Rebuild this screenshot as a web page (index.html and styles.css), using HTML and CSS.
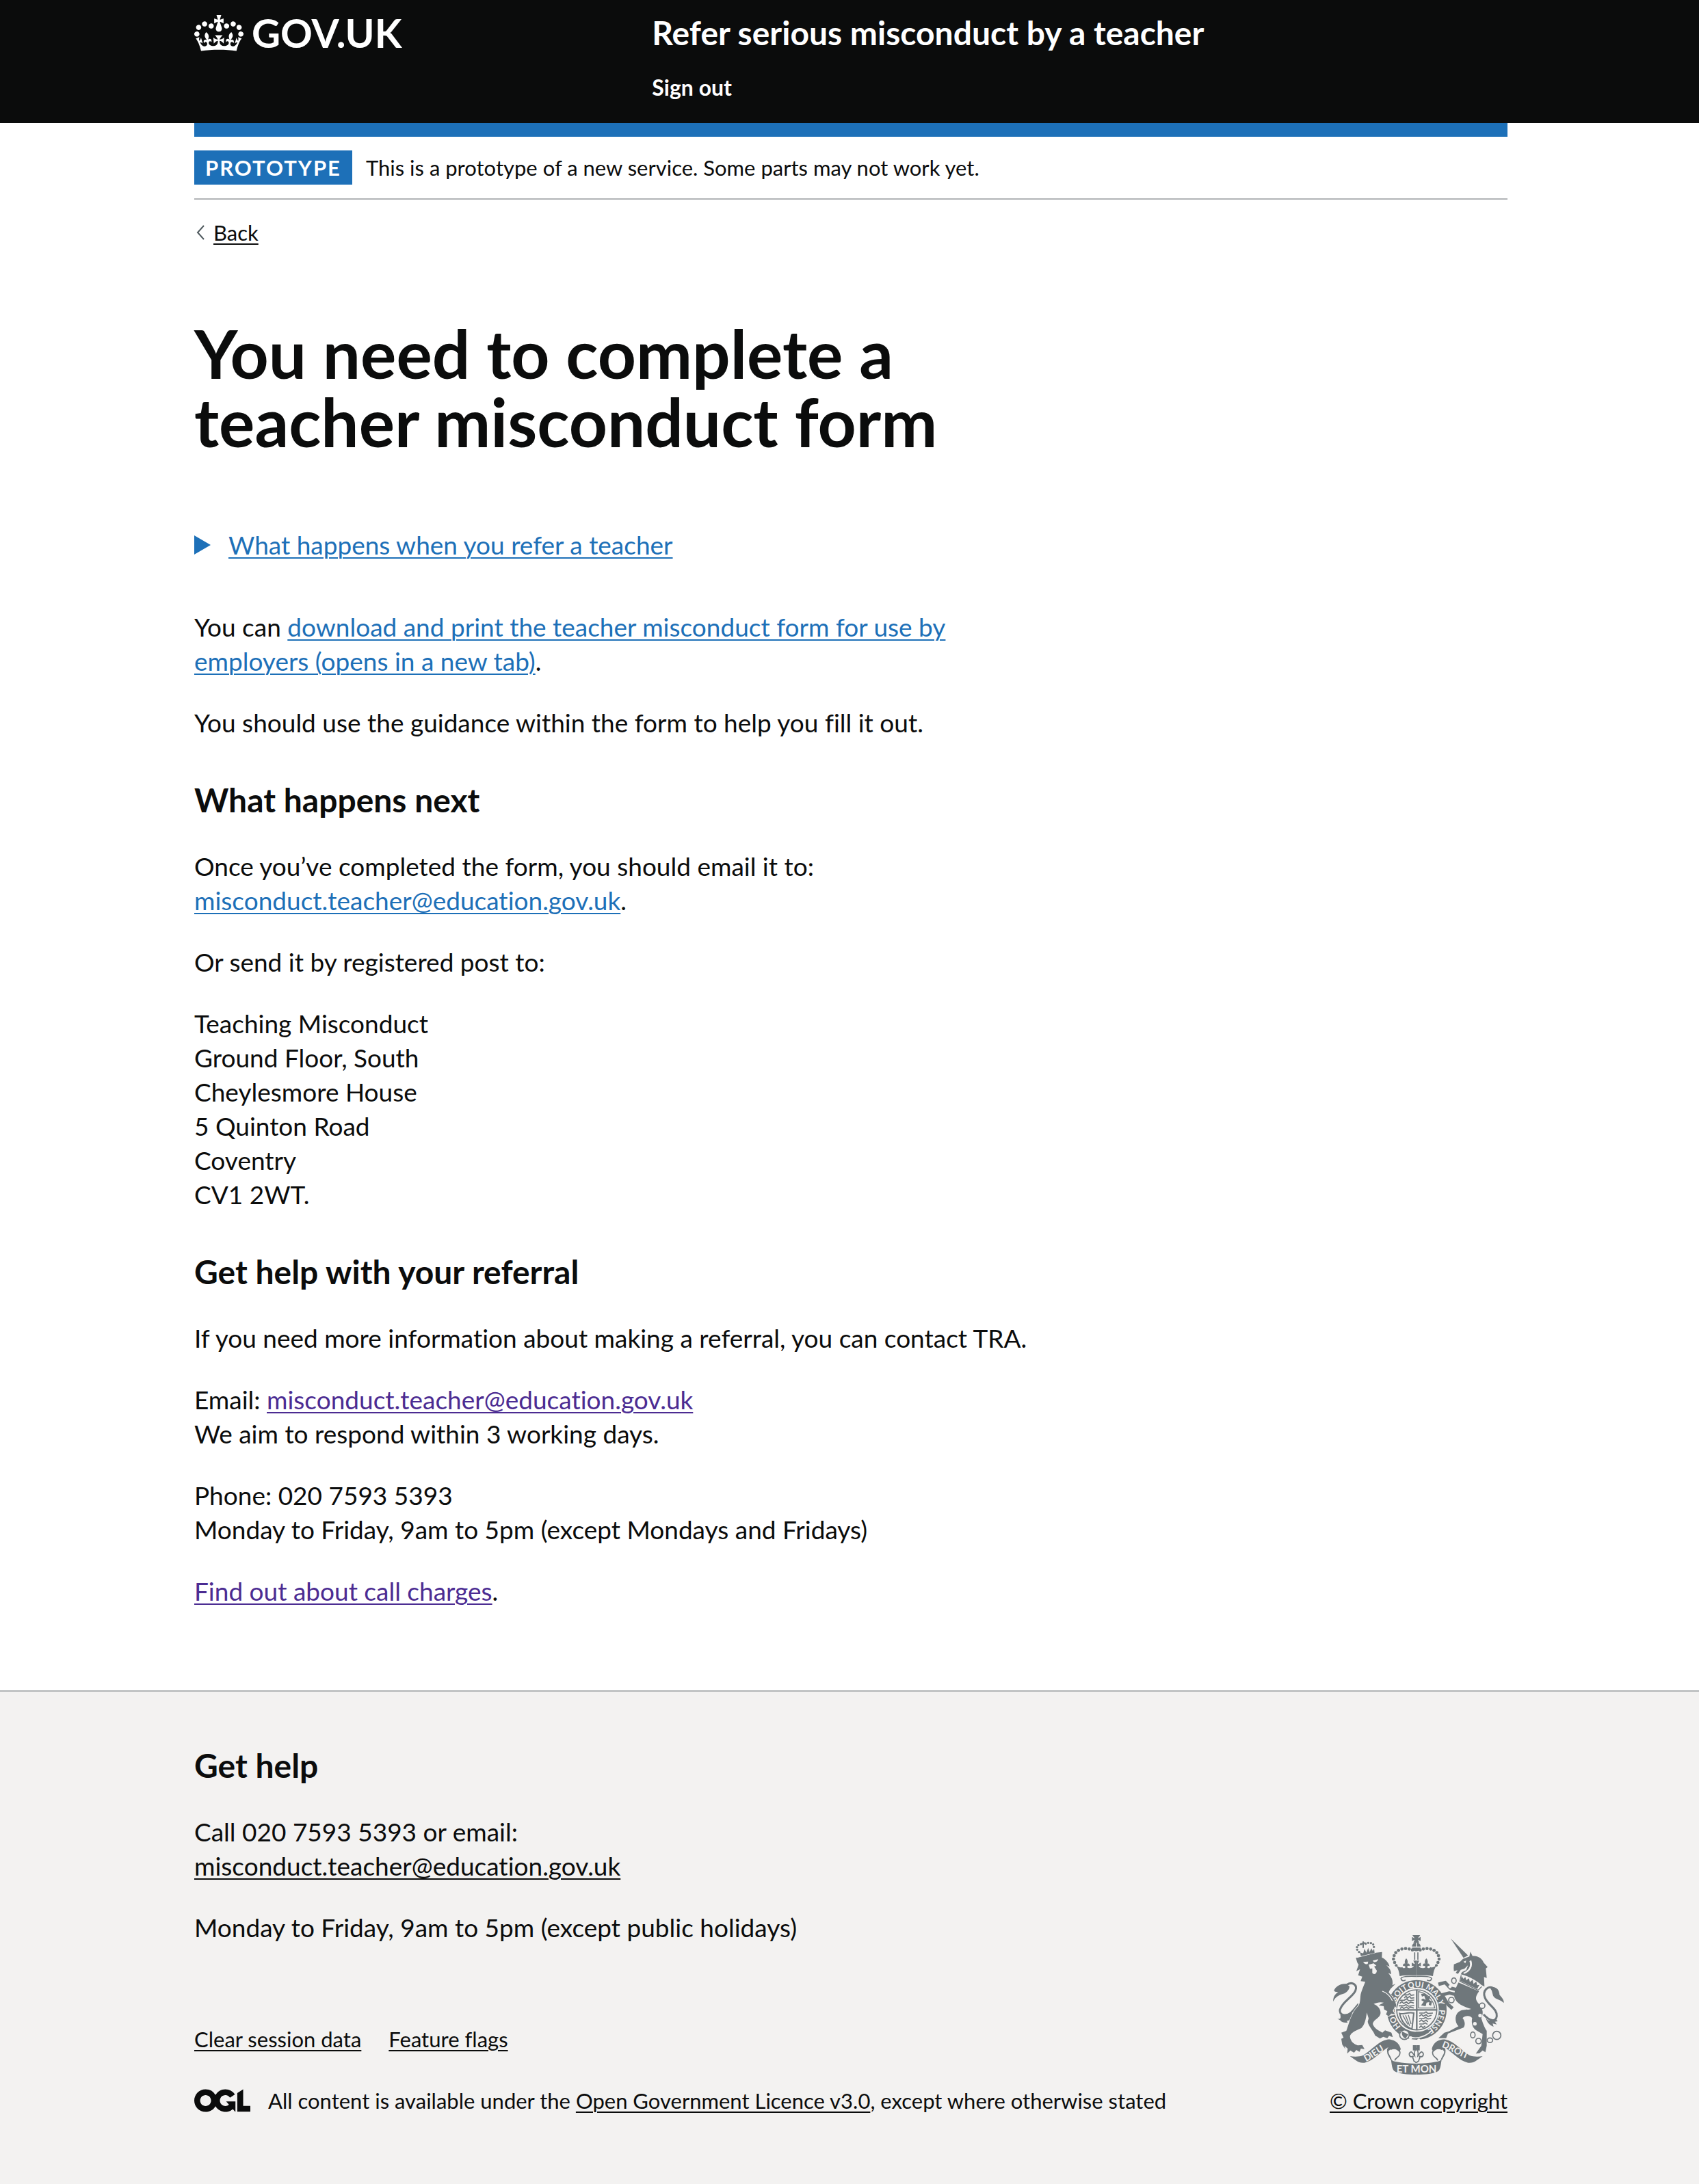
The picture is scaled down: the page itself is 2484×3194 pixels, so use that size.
FILE: index.html
```html
<!DOCTYPE html>
<html lang="en">
<head>
<meta charset="utf-8">
<meta name="viewport" content="width=device-width, initial-scale=1">
<title>You need to complete a teacher misconduct form - Refer serious misconduct by a teacher - GOV.UK</title>
<link rel="stylesheet" href="styles.css">
</head>
<body>
<header class="header">
  <div class="container header-grid">
    <a class="logo" href="#">
      <svg class="crown" viewBox="0 0 132 97" aria-hidden="true"><path fill="currentColor" fill-rule="evenodd" d="M25 30.2c3.5 1.5 7.7-.2 9.1-3.7 1.5-3.6-.2-7.8-3.9-9.2-3.6-1.4-7.6.3-9.1 3.9-1.4 3.5.3 7.5 3.9 9zM9 39.5c3.6 1.5 7.8-.2 9.2-3.7 1.5-3.6-.2-7.8-3.9-9.1-3.6-1.5-7.6.2-9.1 3.8-1.4 3.5.3 7.5 3.8 9zM4.4 57.2c3.5 1.5 7.7-.2 9.1-3.8 1.5-3.6-.2-7.7-3.9-9.1-3.5-1.5-7.6.3-9.1 3.8-1.4 3.5.3 7.6 3.9 9.1zm38.3-21.4c3.5 1.5 7.7-.2 9.1-3.8 1.5-3.6-.2-7.7-3.9-9.1-3.6-1.5-7.6.3-9.1 3.8-1.3 3.6.4 7.7 3.9 9.1zm64.4-5.6c-3.6 1.5-7.8-.2-9.1-3.7-1.5-3.6.2-7.8 3.8-9.2 3.6-1.4 7.7.3 9.2 3.9 1.3 3.5-.4 7.5-3.9 9zm15.9 9.3c-3.6 1.5-7.7-.2-9.1-3.7-1.5-3.6.2-7.8 3.7-9.1 3.6-1.5 7.7.2 9.2 3.8 1.5 3.5-.3 7.5-3.8 9zm4.7 17.7c-3.6 1.5-7.8-.2-9.2-3.8-1.5-3.6.2-7.7 3.9-9.1 3.6-1.5 7.7.3 9.2 3.8 1.3 3.5-.4 7.6-3.9 9.1zM89.3 35.8c-3.6 1.5-7.8-.2-9.2-3.8-1.4-3.6.2-7.7 3.9-9.1 3.6-1.5 7.7.3 9.2 3.8 1.4 3.6-.3 7.7-3.9 9.1zM69.7 17.7l8.9 4.7V9.3l-8.9 2.8c-.2-.3-.5-.6-.9-.9L72.4 0H59.6l3.5 11.2c-.3.3-.6.5-.9.9l-8.8-2.8v13.1l8.8-4.7c.3.3.6.7.9.9l-5 15.4v.1c-.2.8-.4 1.6-.4 2.4 0 4.1 3.1 7.5 7 8.1h.2c.3 0 .7.1 1 .1.4 0 .7 0 1-.1h.2c4-.6 7.1-4.1 7.1-8.1 0-.8-.1-1.7-.4-2.4V34l-5.1-15.4c.4-.2.7-.6 1-.9zM66 92.8c16.9 0 32.8 1.1 47.1 3.2 4-16.9 8.9-26.7 14-33.5l-9.6-3.4c1 4.9 1.1 7.2 0 10.2-1.5-1.4-3-4.3-4.2-8.7L108.6 76c2.8-2 5-3.2 7.5-3.3-4.4 9.4-10 11.9-13.6 11.2-4.3-.8-6.3-4.6-5.6-7.9 1-4.7 5.7-5.9 8-.5 4.3-8.7-3-11.4-7.6-8.8 7.1-7.2 7.9-13.5 2.1-21.1-8 6.1-8.1 12.3-4.5 20.8-4.7-5.4-12.1-2.5-9.5 6.2 3.4-5.2 7.9-2 7.2 3.1-.6 4.3-6.4 7.8-13.5 7.2-10.3-.9-10.9-8-11.2-13.8 2.5-.5 7.1 1.8 11 7.3L80.2 60c-4.1 4.4-8 5.3-12.3 5.4 1.4-4.4 8-11.6 8-11.6H55.5s6.4 7.2 7.9 11.6c-4.2-.1-8-1-12.3-5.4l1.4 16.4c3.9-5.5 8.5-7.7 10.9-7.3-.3 5.8-.9 12.8-11.1 13.8-7.2.6-12.9-2.9-13.5-7.2-.7-5 3.8-8.3 7.1-3.1 2.7-8.7-4.6-11.6-9.4-6.2 3.7-8.5 3.6-14.7-4.6-20.8-5.8 7.6-5 13.9 2.2 21.1-4.7-2.6-11.9.1-7.7 8.8 2.3-5.5 7.1-4.2 8.1.5.7 3.3-1.3 7.1-5.7 7.9-3.5.7-9-1.8-13.5-11.2 2.5.1 4.7 1.3 7.5 3.3l-4.7-15.4c-1.2 4.4-2.7 7.2-4.3 8.7-1.1-3-.9-5.3 0-10.2l-9.5 3.4c5 6.9 9.9 16.7 14 33.5 14.8-2.1 30.8-3.2 47.7-3.2z"/></svg>
      <span>GOV.UK</span>
    </a>
    <div class="header-content">
      <a class="service-name" href="#">Refer serious misconduct by a teacher</a>
      <nav class="header-nav"><a href="#">Sign out</a></nav>
    </div>
  </div>
</header>

<div class="container">
  <div class="phase-banner">
    <strong class="tag">PROTOTYPE</strong>
    <span>This is a prototype of a new service. Some parts may not work yet.</span>
  </div>
  <div class="back">
    <svg class="back-arrow" viewBox="0 0 14 24" aria-hidden="true"><path d="M12 2 3 12l9 10" fill="none" stroke="#505a5f" stroke-width="2"/></svg>
    <a href="#">Back</a>
  </div>
  <main class="main">
    <h1>You need to complete a teacher misconduct form</h1>
    <details>
      <summary>
        <svg class="marker" viewBox="0 0 24 28" aria-hidden="true"><path d="M0 0 24 14 0 28z" fill="currentColor"/></svg>
        <span>What happens when you refer a teacher</span>
      </summary>
    </details>
    <p>You can <a href="#">download and print the teacher misconduct form for use by employers (opens in a new tab)</a>.</p>
    <p>You should use the guidance within the form to help you fill it out.</p>
    <h2>What happens next</h2>
    <p>Once you’ve completed the form, you should email it to:<br><a href="#">misconduct.teacher@education.gov.uk</a>.</p>
    <p>Or send it by registered post to:</p>
    <p>Teaching Misconduct<br>Ground Floor, South<br>Cheylesmore House<br>5 Quinton Road<br>Coventry<br>CV1 2WT.</p>
    <h2>Get help with your referral</h2>
    <p>If you need more information about making a referral, you can contact TRA.</p>
    <p>Email: <a class="visited" href="#">misconduct.teacher@education.gov.uk</a><br>We aim to respond within 3 working days.</p>
    <p>Phone: 020 7593 5393<br>Monday to Friday, 9am to 5pm (except Mondays and Fridays)</p>
    <p><a class="visited" href="#">Find out about call charges</a>.</p>
  </main>
</div>

<footer class="footer">
  <div class="container footer-row">
    <div class="footer-main">
      <h2>Get help</h2>
      <p>Call 020 7593 5393 or email:<br><a href="#">misconduct.teacher@education.gov.uk</a></p>
      <p>Monday to Friday, 9am to 5pm (except public holidays)</p>
      <ul class="footer-links">
        <li><a href="#">Clear session data</a></li>
        <li><a href="#">Feature flags</a></li>
      </ul>
      <div class="licence">
        <svg class="ogl" viewBox="0 0 483.2 195.7" aria-hidden="true"><path fill="currentColor" d="M421.5 142.8V.1l-50.7 32.3v161.1h112.4v-50.7zm-122.3-9.6A47.12 47.12 0 0 1 221 97.8c0-26 21.1-47.1 47.1-47.1 16.7 0 31.4 8.7 39.7 21.8l42.7-27.2A97.63 97.63 0 0 0 268.1 0c-36.5 0-68.3 20.1-85.1 49.7A98 98 0 0 0 97.8 0C43.9 0 0 43.9 0 97.8s43.9 97.8 97.8 97.8c36.5 0 68.3-20.1 85.1-49.7a97.76 97.76 0 0 0 149.6 25.4l19.4 22.2h3v-87.8h-80l24.3 27.5zM97.8 145c-26 0-47.1-21.1-47.1-47.1s21.1-47.1 47.1-47.1 47.1 21.1 47.1 47.1S123.8 145 97.8 145"/></svg>
        <span>All content is available under the <a href="#">Open Government Licence v3.0</a>, except where otherwise stated</span>
      </div>
    </div>
    <div class="copyright">
      <svg class="arms" viewBox="84 60 750 612" aria-hidden="true">
        <defs>
          <path id="belt" d="M383.4 463A101 101 0 0 1 518.6 313A101 101 0 0 1 383.4 463"/>
          <path id="dieu" d="M228 615C262 602 290 568 340 553"/>
          <path id="droit" d="M559 551C600 562 636 596 698 612"/>
          <g id="half">
            <!-- crown arch pearls -->
            <g><circle cx="432" cy="125" r="7"/><circle cx="418" cy="121" r="7"/><circle cx="402" cy="119" r="7"/><circle cx="386" cy="121" r="7"/><circle cx="371" cy="127" r="7"/><circle cx="359" cy="137" r="7"/><circle cx="352" cy="150" r="7"/><circle cx="349" cy="165" r="7"/><circle cx="354" cy="180" r="7"/><circle cx="361" cy="193" r="6"/></g>
            <!-- rim with fleur-de-lis -->
            <path d="M449 236C415 236 388 236 376 240C374 222 370 208 360 192C368 200 380 204 388 200C390 206 398 206 402 200C398 196 394 192 390 196C390 188 396 182 400 186C396 176 400 168 405 162C410 168 414 176 410 186C416 182 421 188 420 196C416 192 411 196 408 200C416 208 434 206 438 196C434 192 432 196 429 198V180C434 184 438 186 443 187L436 172H449Z"/>
            <path d="M449 241C420 240 384 241 382 250C384 262 394 262 402 257" fill="none" stroke="currentColor" stroke-width="5"/>
            <!-- scroll -->
            <path d="M158 591C178 594 200 594 216 587C256 562 284 524 322 518C350 516 374 530 381 560L374 572C364 560 348 556 335 562L324 572C320 564 322 558 326 552C298 566 262 612 222 620C196 624 180 606 158 591Z"/>
            <path d="M336 562C358 548 384 566 376 584C372 598 358 596 355 610" fill="none" stroke="currentColor" stroke-width="5"/>
            <path d="M325 560C318 582 334 590 338 606" fill="none" stroke="currentColor" stroke-width="6"/>
            <path d="M335 594C338 608 346 614 362 616C390 622 420 624 449 624V672C410 672 372 668 352 656C340 644 342 620 335 594Z"/>
            <!-- fleur under the shield -->
            <path d="M434 543H449V566H434Z"/>
            <path d="M449 556C440 568 440 580 442 590C436 584 434 574 426 572C414 576 416 594 430 594L436 590C428 600 440 604 438 612L449 620" fill="none" stroke="currentColor" stroke-width="5"/>
          </g>
        </defs>
        <g fill="currentColor">
          <!-- belt and shield -->
          <path fill-rule="evenodd" d="M451 257a131 131 0 1 0 .1 0ZM451 291a97 97 0 1 1-.1 0Z"/>
          <circle cx="451" cy="388" r="88" fill="none" stroke="currentColor" stroke-width="5"/>
          <path d="M451 300V476M363 388H539" stroke="currentColor" stroke-width="7"/>
          <path d="M459 308V380H530C524 346 500 316 459 308Z" fill="none" stroke="currentColor" stroke-width="4"/>
          <path d="M470 368L482 352L470 345L478 338L490 344L484 326L474 330L470 318L486 316L500 330L510 326L506 344L518 352L514 370L504 366L506 354L494 356L490 372Z"/>
          <g fill="none" stroke="currentColor" stroke-width="5">
            <path d="M392 322h20l8-6 6 8 14-2M396 336l8-8 6 8 10-7 6 8 14-2M376 346h20l10-6 10 8 24-3M376 360l10-8 8 8 12-7 8 8 10-7 14 4M372 370h22l10-5 10 7 26-3M378 382l8-7 8 7 12-6 8 6 10-6 14 4"/>
            <path d="M462 402h22l8-5 8 7 22-2M462 416l10-8 8 8 12-7 8 8 16-6M462 426h20l8-5 10 7 14-2M462 440l10-8 8 8 12-7 8 8M462 450h18l8-5 10 7M462 466l8-8 8 8 10-7"/>
          </g>
          <path d="M376 404C392 410 410 396 438 402L430 472C404 462 384 440 376 404Z" fill="none" stroke="currentColor" stroke-width="6"/>
          <path d="M390 412L412 452M402 412L420 458M414 410L426 450" stroke="currentColor" stroke-width="4"/>
          <!-- strap and buckle -->
          <path d="M378 482C398 512 470 530 520 476" fill="none" stroke="#f3f2f1" stroke-width="5"/>
          <path d="M446 484H470L466 496H448Z"/>
          <circle cx="397" cy="497" r="21" fill="#f3f2f1" stroke="currentColor" stroke-width="5"/>
          <path d="M386 482L414 496L402 514C390 508 384 498 386 482Z"/>
          <circle cx="424" cy="511" r="7" fill="#f3f2f1"/><circle cx="460" cy="521" r="7" fill="#f3f2f1"/>
          <g class="motto motto-belt">
            <text><textPath href="#belt" startOffset="2">HON</textPath></text>
            <text><textPath href="#belt" startOffset="120">SOIT</textPath></text>
            <text><textPath href="#belt" startOffset="202">QUI</textPath></text>
            <text><textPath href="#belt" startOffset="276">MAL</textPath></text>
            <text><textPath href="#belt" startOffset="354">Y</textPath></text>
            <text><textPath href="#belt" startOffset="394">PENSE</textPath></text>
          </g>
          <!-- symmetrical parts -->
          <use href="#half"/>
          <use href="#half" transform="translate(898 0) scale(-1 1)"/>
          <path d="M432 60H466L456 74L468 68V86L456 80L462 94H436L442 80L430 86V68L442 74Z"/>
          <path d="M430 110a19 18 0 0 1 38 0ZM430 115H468C466 136 432 136 430 115Z"/>
          <path d="M442 136V168M456 136V168" stroke="currentColor" stroke-width="5"/>
          <path d="M449 94V112" stroke="#f3f2f1" stroke-width="4"/>
          <!-- lion -->
          <path d="M84 352C85 325 96 318 106 310C94 310 90 308 88 304C94 286 116 272 140 274L156 284C156 302 140 316 120 320C104 326 92 335 84 352Z"/>
          <path d="M142 279C170 260 192 280 182 304C170 332 124 352 114 388C112 412 138 418 158 404C172 394 182 378 196 362" fill="none" stroke="currentColor" stroke-width="9"/>
          <path d="M102 426C112 430 120 428 116 410L170 402C168 424 158 436 144 436L148 444C132 444 122 442 116 434Z"/>
          <path stroke="#f3f2f1" stroke-width="5" paint-order="stroke" d="M190 180L184 160L272 137L299 134L298 158C314 166 328 180 332 198L318 192C332 205 340 218 338 232L326 226C342 245 348 262 344 280L358 274C344 290 332 296 328 312C350 335 362 356 362 380L356 372L346 392L356 408L340 404L328 416L316 408L322 394L308 386L306 372L284 368L306 356C290 352 276 356 262 362C282 370 294 386 292 404C290 424 260 430 258 450C268 476 290 480 300 488L312 478L340 488L346 508L330 502L322 512L304 506L290 514L268 500C262 480 240 462 236 440L240 425L232 400C228 430 222 455 208 468C180 480 160 490 158 505C160 528 178 540 192 544L212 542L222 560L206 558L200 572L186 564L176 576L160 566L146 580L148 558L134 546L138 560L124 540L120 515L130 510L120 488L142 480C152 456 164 400 190 376C205 362 202 340 205 320C212 295 220 280 225 265L205 262L212 242L194 236L202 210L186 218L196 190Z"/>
          <path fill="#f3f2f1" d="M216 178L238 176L236 186C228 190 220 186 216 178ZM258 172L282 166C280 176 270 180 262 178ZM240 190L262 184L274 194L264 198L276 216C276 230 262 236 256 226L256 206L246 208Z"/>
          <path fill="none" stroke="#f3f2f1" stroke-width="4" d="M300 306C320 314 336 330 344 348"/>
          <path d="M188 158L270 136" stroke="#f3f2f1" stroke-width="4"/>
          <path d="M202 136L206 152L266 138L264 120L258 130L252 118L244 134L238 116L230 137L222 120L216 140Z"/>
          <g><circle cx="198" cy="134" r="5"/><circle cx="190" cy="124" r="5"/><circle cx="189" cy="113" r="5"/><circle cx="195" cy="104" r="5"/><circle cx="206" cy="100" r="5"/><circle cx="227" cy="98" r="5"/><circle cx="238" cy="94" r="5"/><circle cx="250" cy="95" r="5"/><circle cx="260" cy="101" r="5"/><circle cx="263" cy="112" r="5"/></g>
          <path d="M216 88V116M208 98L226 94" stroke="currentColor" stroke-width="6"/>
          <!-- unicorn -->
          <path d="M600 75L676 149L656 160Z"/>
          <path d="M613 205L614 188L640 178L654 164L682 154L686 133L696 152C720 150 738 164 744 180L762 200L754 206L758 248L746 244L748 286L734 278C714 262 690 244 644 232L650 222L668 214L676 192L660 208L644 212L632 230L622 226L630 214L614 218Z"/>
          <path fill="#f3f2f1" d="M656 176L668 172L664 184ZM690 170C700 196 686 220 660 230L654 226C680 214 690 196 682 174Z"/>
          <path fill="none" stroke="currentColor" stroke-width="4" d="M646 236L640 262L720 302L736 286"/>
          <path d="M648 240L656 252L664 244L668 258L680 250L684 266L696 256L700 274L712 264L716 280L726 278L716 296L642 260Z"/>
          <path d="M634 268L724 307C706 332 708 344 722 360C744 386 744 404 734 424C742 450 748 466 758 480V545L752 574L740 566L726 578L710 580L734 546L740 494L712 478C694 466 690 446 694 424C684 410 662 414 652 424C664 440 664 456 656 466L588 492L580 512H546L572 488L592 482L634 460C616 440 616 404 642 392C660 384 676 390 690 384C656 374 624 360 616 332C612 315 625 285 634 268Z"/>
          <g fill="none" stroke="currentColor" stroke-width="15" stroke-linejoin="round"><path d="M546 276L576 268L598 292L628 300"/><path d="M608 382L588 364L562 322L594 314L628 322"/></g>
          <g fill="#f3f2f1"><circle cx="597" cy="286" r="7"/><circle cx="729" cy="413" r="8"/><circle cx="706" cy="449" r="8"/></g>
          <g fill="#f3f2f1" stroke="currentColor" stroke-width="5"><ellipse cx="614" cy="260" rx="10" ry="12"/><circle cx="603" cy="345" r="12"/><circle cx="738" cy="370" r="12"/><ellipse cx="697" cy="498" rx="10" ry="13"/><circle cx="722" cy="525" r="12"/><ellipse cx="772" cy="521" rx="12" ry="10"/><circle cx="802" cy="500" r="18"/></g>
          <path d="M772 290C798 282 814 300 814 322C824 334 834 344 833 358C820 342 796 344 786 326L780 304Z"/>
          <path fill="none" stroke="currentColor" stroke-width="9" d="M790 294C764 278 738 304 750 334C762 366 806 384 802 416C798 444 772 438 744 408"/>
          <path d="M754 424C764 438 776 440 796 424L806 438L794 440L802 452L784 448L788 462C770 456 760 444 754 424Z"/>
          <g class="motto">
            <text><textPath href="#dieu">DIEU</textPath></text>
            <text><textPath href="#droit">DROIT</textPath></text>
            <text x="450" y="663" text-anchor="middle" class="motto-centre">ET MON</text>
          </g>
        </g>
      </svg>
      <a href="#">© Crown copyright</a>
    </div>
  </div>
</footer>
</body>
</html>
```
FILE: styles.css
```css
* {
  box-sizing: border-box;
}

body {
  margin: 0;
  font-family: Lato, "Liberation Sans", sans-serif;
  font-size: 37px;
  font-variant-ligatures: none;
  line-height: 50px;
  color: #0b0c0c;
  background: #fff;
}

a {
  color: #1d70b8;
  text-decoration: underline;
  text-decoration-thickness: 2px;
  text-underline-offset: 4px;
}

a.visited {
  color: #4c2c92;
}

svg {
  display: block;
  flex: none;
}

.container {
  max-width: 1924px;
  margin: 0 auto;
  padding-left: 4px;
}

/* Header */
.header {
  background: #0b0c0c;
  color: #fff;
}

.header a {
  color: #fff;
  font-weight: 700;
  text-decoration: none;
}

.header-grid {
  display: grid;
  grid-template-columns: minmax(0, 1fr) minmax(0, 2fr);
  column-gap: 44px;
  padding-top: 18px;
  padding-bottom: 32px;
}

.logo {
  display: flex;
  gap: 12px;
  align-items: center;
  align-self: start;
  font-size: 58px;
  line-height: 60px;
}

.crown {
  width: 72px;
  height: 53px;
}

.header-content {
  display: flex;
  flex-direction: column;
  gap: 30px;
}

.service-name {
  font-size: 48px;
  line-height: 60px;
}

.header-nav {
  font-size: 32px;
  line-height: 40px;
}

/* Phase banner and back link */
.phase-banner {
  display: flex;
  align-items: center;
  gap: 20px;
  padding: 20px 0;
  border-top: 20px solid #1d70b8;
  border-bottom: 2px solid #b1b4b6;
  font-size: 31px;
}

.tag {
  padding: 0 16px;
  background: #1d70b8;
  color: #fff;
  letter-spacing: 2px;
}

.back {
  display: flex;
  align-items: center;
  gap: 12px;
  margin-top: 28px;
  padding-left: 2px;
  font-size: 31px;
  line-height: 40px;
}

.back a {
  color: #0b0c0c;
}

.back-arrow {
  width: 14px;
  height: 24px;
}

/* Main content */
.main {
  max-width: 1260px;
  padding: 106px 0 80px;
}

h1 {
  margin: 0 0 106px;
  font-size: 98px;
  line-height: 100px;
}

h2 {
  margin: 0 0 42px;
  font-size: 48px;
  line-height: 60px;
}

p {
  margin: 0 0 40px;
}

p + h2 {
  padding-top: 18px;
}

details {
  margin-bottom: 70px;
}

summary {
  display: flex;
  align-items: center;
  gap: 26px;
  color: #1d70b8;
  list-style: none;
  cursor: pointer;
}

summary span {
  text-decoration: underline;
  text-decoration-thickness: 2px;
  text-underline-offset: 4px;
}

.marker {
  width: 24px;
  height: 28px;
}

/* Footer */
.footer {
  padding: 78px 0 102px;
  border-top: 2px solid #b1b4b6;
  background: #f3f2f1;
}

.footer a {
  color: #0b0c0c;
}

.footer-row {
  display: flex;
  align-items: flex-end;
  justify-content: space-between;
  gap: 40px;
}

.footer-links {
  display: flex;
  gap: 40px;
  margin: 118px 0 50px;
  padding: 0;
  list-style: none;
  font-size: 31px;
  line-height: 40px;
}

.licence {
  display: flex;
  align-items: center;
  gap: 26px;
  font-size: 31px;
  line-height: 40px;
}

.ogl {
  width: 82px;
  height: 34px;
}

.copyright {
  display: flex;
  flex-direction: column;
  align-items: center;
  gap: 18px;
  font-size: 31px;
  line-height: 40px;
}

.arms {
  width: 250px;
  height: 204px;
  color: #6f777b;
}

.motto {
  fill: #f3f2f1;
  font-size: 40px;
  font-weight: 700;
}

.motto-belt {
  font-size: 35px;
}

.motto-centre {
  font-size: 45px;
}
```
